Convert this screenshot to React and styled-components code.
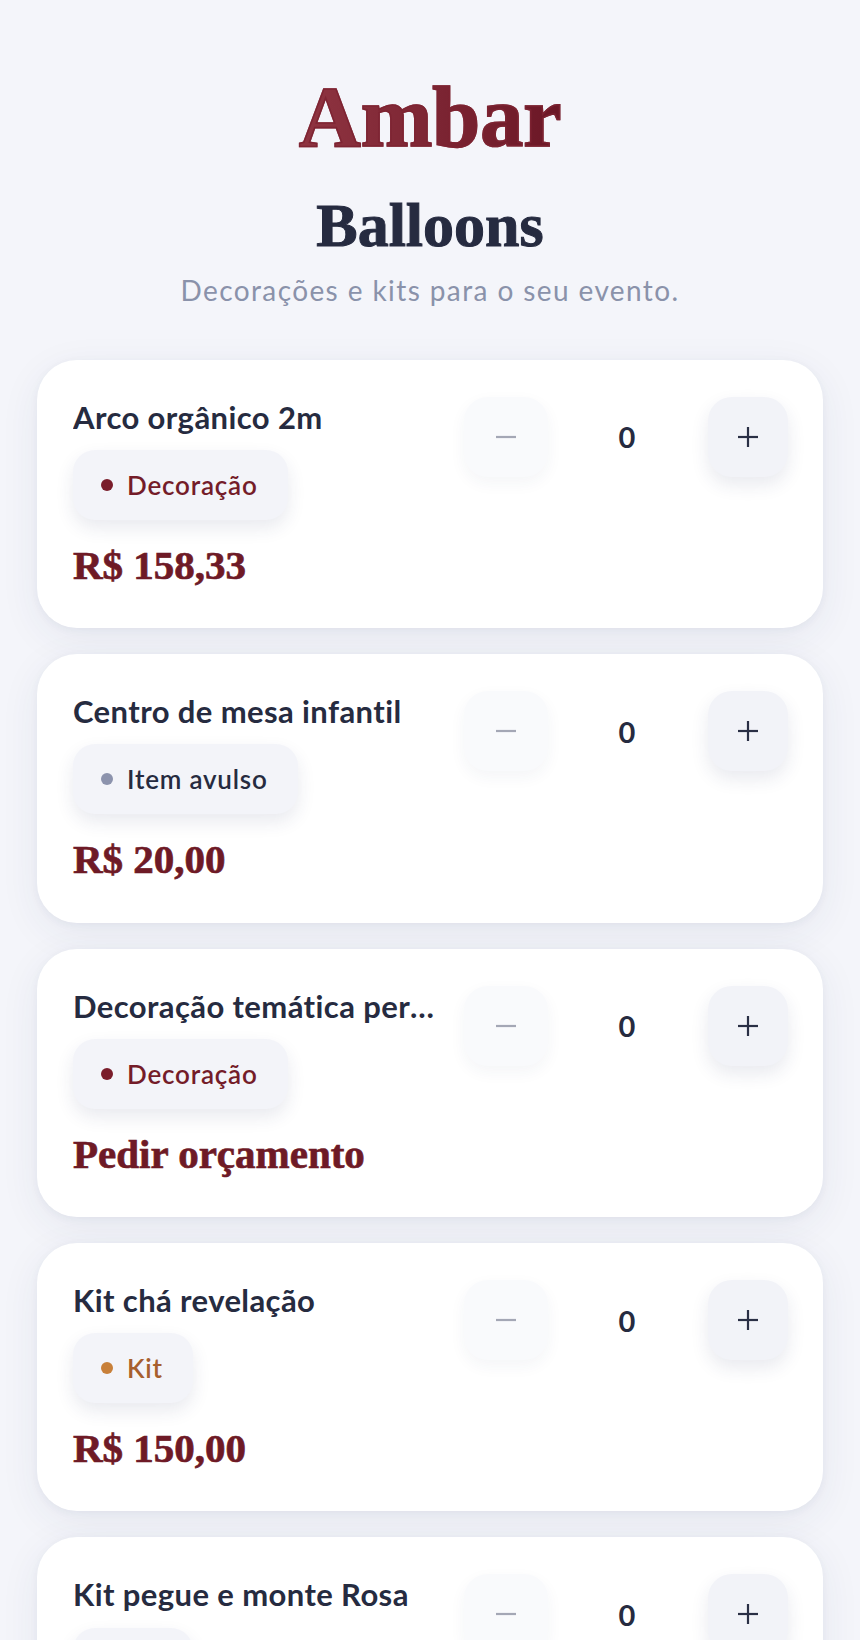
import { useState } from "react"
import styled, { createGlobalStyle } from "styled-components"

const products = [
  { id: 1, name: "Arco orgânico 2m", type: "deco", price: "R$ 158,33" },
  { id: 2, name: "Centro de mesa infantil", type: "item", price: "R$ 20,00" },
  { id: 3, name: "Decoração temática personalizada", type: "deco", price: null },
  { id: 4, name: "Kit chá revelação", type: "kit", price: "R$ 150,00" },
  { id: 5, name: "Kit pegue e monte Rosa", type: "kit", price: "R$ 89,90" },
]

const tags = {
  deco: { label: "Decoração", dot: "#7a1d2b", text: "#741c29" },
  item: { label: "Item avulso", dot: "#8c93ad", text: "#262b40" },
  kit: { label: "Kit", dot: "#c8803a", text: "#a75f2e" },
}

const ProductCard = ({ product }) => {
  const [qty, setQty] = useState(0)
  const tag = tags[product.type]
  return (
    <Card>
      <Info>
        <Name>{product.name}</Name>
        <Tag $color={tag.text}>
          <Dot $color={tag.dot} />
          {tag.label}
        </Tag>
        <Price>{product.price || "Pedir orçamento"}</Price>
      </Info>
      <Stepper>
        <StepButton $disabled={qty === 0} onClick={() => setQty(Math.max(0, qty - 1))}>
          <svg width="22" height="22" viewBox="0 0 22 22">
            <line x1="1" y1="11" x2="21" y2="11" stroke="currentColor" strokeWidth="2.2" />
          </svg>
        </StepButton>
        <Count>{qty}</Count>
        <StepButton onClick={() => setQty(qty + 1)}>
          <svg width="22" height="22" viewBox="0 0 22 22">
            <line x1="1" y1="11" x2="21" y2="11" stroke="currentColor" strokeWidth="2.2" />
            <line x1="11" y1="1" x2="11" y2="21" stroke="currentColor" strokeWidth="2.2" />
          </svg>
        </StepButton>
      </Stepper>
    </Card>
  )
}

const App = () => {
  return (
    <>
      <GlobalStyle />
      <Page>
        <Header>
          <Brand>Ambar</Brand>
          <Title>Balloons</Title>
          <Subtitle>Decorações e kits para o seu evento.</Subtitle>
        </Header>
        <List>
          {products.map((p) => (
            <ProductCard key={p.id} product={p} />
          ))}
        </List>
      </Page>
    </>
  )
}

export default App

const GlobalStyle = createGlobalStyle`
  * { box-sizing: border-box; }
  body {
    margin: 0;
    background: #f4f5fa;
    font-family: Lato, "Noto Sans", sans-serif;
    color: #262b40;
  }
`

const Page = styled.div`
  min-height: 100vh;
  padding: 74px 37px 40px;
`

const Header = styled.header`
  display: flex;
  flex-direction: column;
  align-items: center;
  text-align: center;
`

const Brand = styled.h1`
  margin: 0;
  font-family: "Liberation Serif", serif;
  font-weight: 700;
  font-size: 86px;
  line-height: 1;
  background: linear-gradient(90deg, #8f3441 0%, #6b1726 100%);
  -webkit-background-clip: text;
  background-clip: text;
  color: transparent;
  -webkit-text-stroke: 1.6px rgba(125, 36, 50, 0.9);
`

const Title = styled.h2`
  margin: 34px 0 0;
  font-family: "Liberation Serif", serif;
  font-weight: 700;
  font-size: 62px;
  line-height: 1;
  color: #262b40;
  -webkit-text-stroke: 1px #262b40;
`

const Subtitle = styled.p`
  margin: 18px 0 0;
  font-size: 28px;
  line-height: 1.2;
  letter-spacing: 1.4px;
  color: #8a92aa;
`

const List = styled.div`
  display: flex;
  flex-direction: column;
  gap: 26px;
  margin-top: 52px;
`

const Card = styled.div`
  display: flex;
  align-items: flex-start;
  gap: 20px;
  padding: 37px 35px 37px 36px;
  background: #fff;
  border-radius: 40px;
  box-shadow: 0 10px 40px rgba(40, 50, 100, 0.07), 0 2px 8px rgba(40, 50, 100, 0.05);
`

const Info = styled.div`
  flex: 1;
  min-width: 0;
  display: flex;
  flex-direction: column;
  align-items: flex-start;
`

const Name = styled.div`
  width: 100%;
  font-size: 31px;
  font-weight: 700;
  line-height: 1.33;
  letter-spacing: 0.4px;
  color: #262b40;
  white-space: nowrap;
  overflow: hidden;
  text-overflow: ellipsis;
`

const Tag = styled.div`
  display: flex;
  align-items: center;
  gap: 14px;
  height: 70px;
  margin-top: 12px;
  padding: 0 30px 0 28px;
  border-radius: 22px;
  background: #f3f4f9;
  box-shadow: 0 8px 18px rgba(40, 50, 100, 0.1);
  font-size: 26px;
  font-weight: 600;
  letter-spacing: 0.8px;
  color: ${(p) => p.$color};
`

const Dot = styled.span`
  width: 12px;
  height: 12px;
  border-radius: 50%;
  background: ${(p) => p.$color};
`

const Price = styled.div`
  margin-top: 20px;
  font-family: "Liberation Serif", serif;
  font-weight: 700;
  font-size: 41px;
  line-height: 1.25;
  color: #6e1a26;
  -webkit-text-stroke: 0.7px #6e1a26;
`

const Stepper = styled.div`
  flex-shrink: 0;
  display: grid;
  grid-template-columns: 82px 162px 80px;
  align-items: center;
`

const StepButton = styled.button`
  display: flex;
  align-items: center;
  justify-content: center;
  width: ${(p) => (p.$disabled ? "84px" : "80px")};
  height: 80px;
  padding: 0;
  border: none;
  border-radius: 24px;
  cursor: pointer;
  background: ${(p) => (p.$disabled ? "#f9fafc" : "#f2f3f8")};
  color: ${(p) => (p.$disabled ? "#a4a7b5" : "#2a2f45")};
  box-shadow: ${(p) =>
    p.$disabled ? "0 6px 16px rgba(40, 50, 100, 0.05)" : "0 8px 18px rgba(40, 50, 100, 0.1)"};
`

const Count = styled.span`
  text-align: center;
  font-size: 29px;
  font-weight: 700;
  color: #262b40;
`
